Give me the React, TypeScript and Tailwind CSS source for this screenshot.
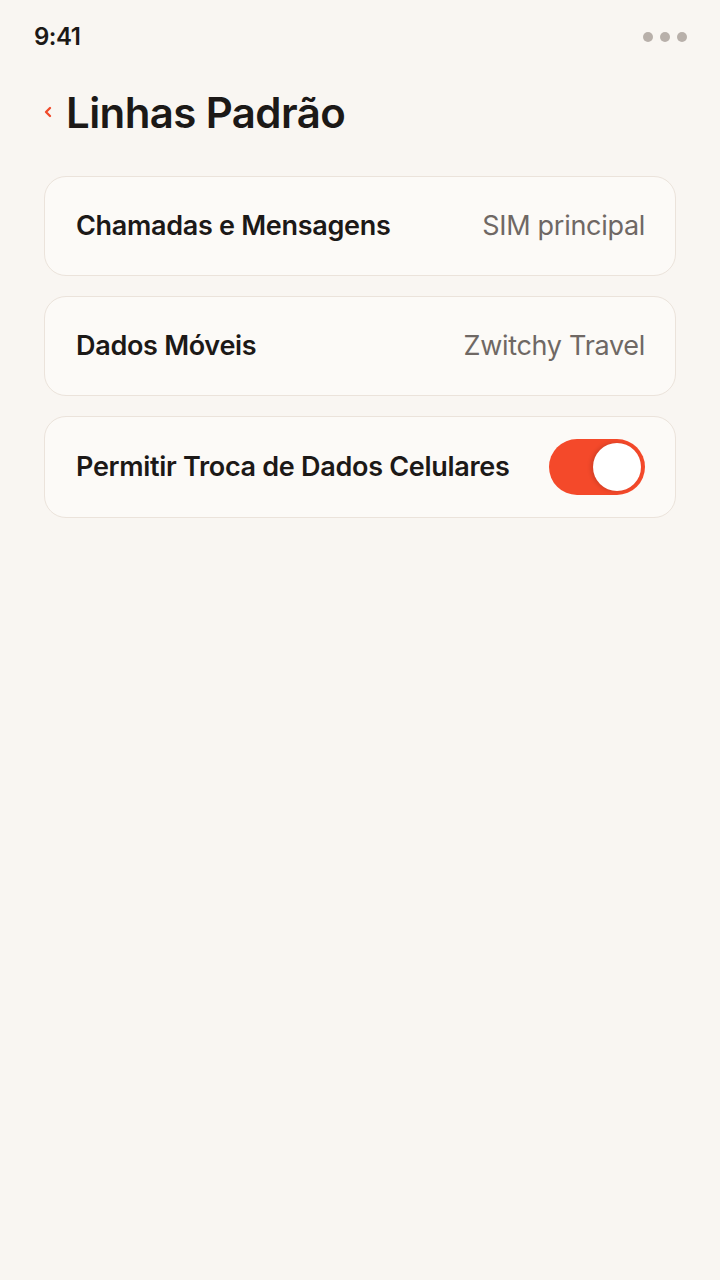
import { ChevronLeft } from 'lucide-react'

const font = { fontFamily: 'Inter, "Noto Sans", sans-serif' }

function ValueRow({ label, value }: { label: string; value: string }) {
  return (
    <div className="flex h-[100px] items-center justify-between rounded-[22px] border border-[#ebe3db] bg-[#fcfaf7] pl-[31px] pr-[30px]">
      <span className="text-[27px] font-semibold tracking-[-0.3px] text-[#1c1917]">{label}</span>
      <span className="text-[27px] tracking-[-0.3px] text-[#6f6864]">{value}</span>
    </div>
  )
}

export default function App() {
  return (
    <div className="min-h-[1280px] w-[720px] bg-[#f9f6f2]" style={font}>
      <div className="flex h-[74px] items-center justify-between pl-[34px] pr-[33px]">
        <span className="text-[24px] font-semibold tracking-[-0.5px] text-[#1c1917]">9:41</span>
        <div className="flex gap-[7px]">
          <span className="h-[10px] w-[10px] rounded-full bg-[#b8b0aa]" />
          <span className="h-[10px] w-[10px] rounded-full bg-[#b8b0aa]" />
          <span className="h-[10px] w-[10px] rounded-full bg-[#b8b0aa]" />
        </div>
      </div>
      <div className="flex h-[76px] items-center gap-[10px] pl-[40px]">
        <ChevronLeft className="h-[16px] w-[16px] text-[#f04a2a]" strokeWidth={3.5} aria-hidden />
        <h1 className="text-[42px] font-semibold tracking-[-0.6px] text-[#1c1917]">Linhas Padrão</h1>
      </div>
      <div className="mt-[26px] flex flex-col gap-[20px] px-[44px]">
        <ValueRow label="Chamadas e Mensagens" value="SIM principal" />
        <ValueRow label="Dados Móveis" value="Zwitchy Travel" />
        <div className="flex h-[102px] items-center justify-between rounded-[22px] border border-[#ebe3db] bg-[#fcfaf7] pl-[31px] pr-[30px]">
          <span className="text-[27px] font-semibold tracking-[-0.3px] text-[#1c1917]">
            Permitir Troca de Dados Celulares
          </span>
          <button
            type="button"
            className="flex h-[56px] w-[96px] items-center justify-end rounded-full bg-[#f4492a] pr-[4px]"
          >
            <span className="h-[48px] w-[48px] rounded-full bg-white shadow-[-2px_0_4px_rgba(0,0,0,0.15)]" />
          </button>
        </div>
      </div>
    </div>
  )
}
